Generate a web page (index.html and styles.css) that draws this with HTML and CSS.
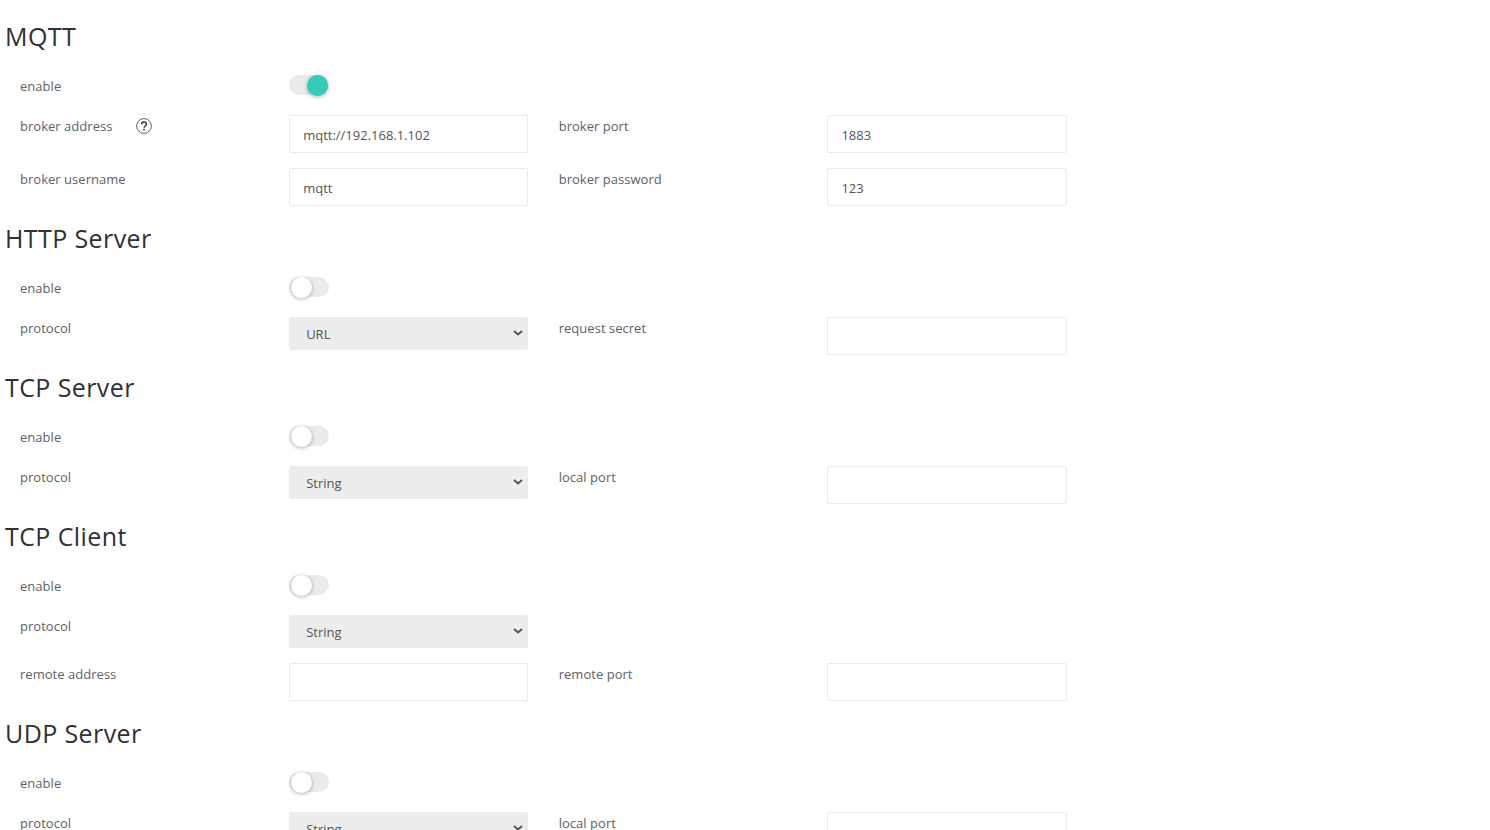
FILE: index.html
```html
<!DOCTYPE html>
<html lang="en">
<head>
<meta charset="utf-8">
<title>Settings</title>
<link rel="stylesheet" href="styles.css">
</head>
<body>
<main class="page">
  <section>
    <h2 class="title">MQTT</h2>
    <div class="row row-toggle">
      <label class="label">enable</label>
      <div class="cell"><span class="switch on"><span class="knob"></span></span></div>
    </div>
    <div class="row">
      <label class="label has-help">broker address
        <svg class="help" viewBox="0 0 16 16" width="16" height="16" aria-hidden="true">
          <circle cx="8" cy="8" r="7.4" fill="none" stroke="#666" stroke-width="1"/>
          <path d="M5.6 6.2c0-1.4 1-2.3 2.4-2.3s2.5.9 2.5 2.2c0 1.9-2.4 1.9-2.4 3.7" fill="none" stroke="#333" stroke-width="1.5"/>
          <rect x="7.2" y="10.8" width="1.6" height="1.7" fill="#333"/>
        </svg>
      </label>
      <div class="cell"><input class="input" type="text" value="mqtt://192.168.1.102"></div>
      <label class="label">broker port</label>
      <div class="cell"><input class="input" type="text" value="1883"></div>
    </div>
    <div class="row">
      <label class="label">broker username</label>
      <div class="cell"><input class="input" type="text" value="mqtt"></div>
      <label class="label">broker password</label>
      <div class="cell"><input class="input" type="text" value="123"></div>
    </div>
  </section>
  <section>
    <h2 class="title">HTTP Server</h2>
    <div class="row row-toggle">
      <label class="label">enable</label>
      <div class="cell"><span class="switch"><span class="knob"></span></span></div>
    </div>
    <div class="row">
      <label class="label">protocol</label>
      <div class="cell select-wrap">
        <select class="select"><option>URL</option></select>
        <svg class="chevron" viewBox="0 0 10 6" width="10" height="6" aria-hidden="true"><path d="M1 1l4 3.4L9 1" fill="none" stroke="#555" stroke-width="2"/></svg>
      </div>
      <label class="label">request secret</label>
      <div class="cell"><input class="input" type="text"></div>
    </div>
  </section>
  <section>
    <h2 class="title">TCP Server</h2>
    <div class="row row-toggle">
      <label class="label">enable</label>
      <div class="cell"><span class="switch"><span class="knob"></span></span></div>
    </div>
    <div class="row">
      <label class="label">protocol</label>
      <div class="cell select-wrap">
        <select class="select"><option>String</option></select>
        <svg class="chevron" viewBox="0 0 10 6" width="10" height="6" aria-hidden="true"><path d="M1 1l4 3.4L9 1" fill="none" stroke="#555" stroke-width="2"/></svg>
      </div>
      <label class="label">local port</label>
      <div class="cell"><input class="input" type="text"></div>
    </div>
  </section>
  <section>
    <h2 class="title">TCP Client</h2>
    <div class="row row-toggle">
      <label class="label">enable</label>
      <div class="cell"><span class="switch"><span class="knob"></span></span></div>
    </div>
    <div class="row">
      <label class="label">protocol</label>
      <div class="cell select-wrap">
        <select class="select"><option>String</option></select>
        <svg class="chevron" viewBox="0 0 10 6" width="10" height="6" aria-hidden="true"><path d="M1 1l4 3.4L9 1" fill="none" stroke="#555" stroke-width="2"/></svg>
      </div>
    </div>
    <div class="row">
      <label class="label">remote address</label>
      <div class="cell"><input class="input" type="text"></div>
      <label class="label">remote port</label>
      <div class="cell"><input class="input" type="text"></div>
    </div>
  </section>
  <section>
    <h2 class="title">UDP Server</h2>
    <div class="row row-toggle">
      <label class="label">enable</label>
      <div class="cell"><span class="switch"><span class="knob"></span></span></div>
    </div>
    <div class="row">
      <label class="label">protocol</label>
      <div class="cell select-wrap">
        <select class="select"><option>String</option></select>
        <svg class="chevron" viewBox="0 0 10 6" width="10" height="6" aria-hidden="true"><path d="M1 1l4 3.4L9 1" fill="none" stroke="#555" stroke-width="2"/></svg>
      </div>
      <label class="label">local port</label>
      <div class="cell"><input class="input" type="text"></div>
    </div>
  </section>
</main>
</body>
</html>
```
FILE: styles.css
```css
* { box-sizing: border-box; }
html, body { margin: 0; height: 830px; overflow: hidden; background: #fff; }
body { font-family: "Open Sans", sans-serif; font-size: 13px; color: #606266; }
.page { padding: 18px 0 0 5px; }
.title {
  margin: 0 0 21px;
  height: 36px;
  line-height: 36px;
  font-size: 25px;
  font-weight: 400;
  letter-spacing: .4px;
  color: #303133;
}
section + section .title { margin-top: -1px; }
.row {
  display: grid;
  grid-template-columns: repeat(4, 269.15px);
  margin-bottom: 15px;
}
.row-toggle { height: 25px; }
.label, .cell { padding: 0 15px; }
.label { line-height: 22px; display: block; letter-spacing: .03px; }
.cell + .label { padding-left: 15.4px; }
.has-help { display: flex; align-items: center; height: 22px; }
.help { margin-left: 24px; }
.input {
  display: block;
  width: 100%;
  height: 38px;
  padding: 2px 13px 0;
  border: 1px solid #ebebeb;
  border-radius: 2px;
  outline: none;
  background: #fff;
  font: 13px "Open Sans", sans-serif;
  color: #555;
}
.select-wrap { position: relative; }
.select {
  display: block;
  width: 100%;
  height: 33px;
  padding: 0 30px 0 17px;
  border: 0;
  border-radius: 2px;
  appearance: none;
  background-color: #ededed;
  font: 13px "Open Sans", sans-serif;
  color: #555;
}
.chevron { position: absolute; top: 13px; right: 20px; }
.switch {
  position: relative;
  display: block;
  width: 40px;
  height: 20px;
  border-radius: 10px;
  background: #ebebeb;
}
.knob {
  position: absolute;
  top: -0.5px;
  left: 2px;
  width: 21px;
  height: 21px;
  border-radius: 50%;
  background: #fff;
  box-shadow: 0 1px 4px rgba(0,0,0,.3);
}
.switch.on .knob { left: 18px; background: #34cbb9; }
```
